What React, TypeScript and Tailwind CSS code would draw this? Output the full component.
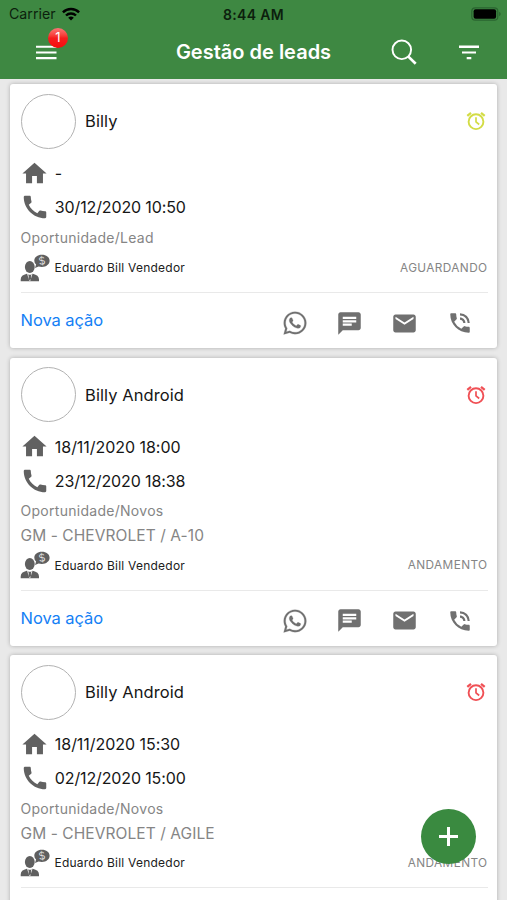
import React from "react";
import { MdHome, MdCall, MdChat, MdEmail, MdPhoneInTalk } from "react-icons/md";
import { FaWhatsapp } from "react-icons/fa";

type Lead = {
  name: string;
  visit: string;
  call: string;
  kind: string;
  car?: string;
  status: string;
  alarm: string;
};

const leads: Lead[] = [
  { name: "Billy", visit: "-", call: "30/12/2020 10:50", kind: "Oportunidade/Lead", status: "AGUARDANDO", alarm: "text-[#d3dc45]" },
  { name: "Billy Android", visit: "18/11/2020 18:00", call: "23/12/2020 18:38", kind: "Oportunidade/Novos", car: "GM - CHEVROLET / A-10", status: "ANDAMENTO", alarm: "text-[#f05055]" },
  { name: "Billy Android", visit: "18/11/2020 15:30", call: "02/12/2020 15:00", kind: "Oportunidade/Novos", car: "GM - CHEVROLET / AGILE", status: "ANDAMENTO", alarm: "text-[#f05055]" },
];

function AlarmIcon({ className }: { className: string }) {
  return (
    <svg width="20" height="20" viewBox="0 0 20 20" fill="none" stroke="currentColor" className={className}>
      <circle cx="10" cy="10.7" r="7.4" strokeWidth="1.9" />
      <path d="M10 6.2v4.600l3.200 2.700" strokeWidth="1.700" />
      <path d="M1.300 4.800L5 1.800M18.700 4.800L15 1.800" strokeWidth="2.300" />
    </svg>
  );
}

function SellerIcon() {
  return (
    <svg width="30" height="28" viewBox="0 0 30 28" fill="#5f5f5f" className="-ml-[0.5px]">
      <ellipse cx="9.800" cy="13" rx="4.900" ry="6" />
      <path d="M.7 27.200v-1.700c0-3 2-4.700 6.200-5.700l2.900 1.500 2.900-1.500c4.200 1 6.300 2.700 6.300 5.700v1.700z" />
      <path d="M7.600 20l2.200 6.800L12 20" fill="none" stroke="#fff" strokeWidth=".8" />
      <path d="M9.100 20.700h1.400l.5 4-1.200 1.800-1.200-1.800z" />
      <path d="M21.900.8c4.400 0 7.700 2.500 7.700 5.900s-3.300 6.200-7.700 6.200c-1.200 0-2.300-.2-3.300-.5l-3.600 1.700 1.100-3.500a5.200 5.200 0 0 1-1.800-3.900C14.300 3.300 17.500.8 21.900.8z" />
      <text x="21.900" y="10.500" textAnchor="middle" fontSize="10.500" fill="#ddd" fontFamily="Inter, sans-serif" transform="rotate(-10 21.900 7)">$</text>
    </svg>
  );
}

function LeadCard({ lead }: { lead: Lead }) {
  return (
    <article className="flex shrink-0 flex-col rounded-[3px] bg-white pt-[9px] pr-[9.5px] pl-[10.5px] shadow-[0_0_4px_rgba(0,0,0,0.26)]">
      <div className="flex h-14 items-center">
        <div className="size-[55px] rounded-full border-[1.5px] border-[#b2b2b2]" />
        <h2 className="ml-[9.5px] flex-1 pt-[1px] text-[16.5px] tracking-[0.08px] text-[#161616]">{lead.name}</h2>
        <AlarmIcon className={`mr-[2px] ${lead.alarm}`} />
      </div>
      <div className="mt-[7px] flex h-[34px] items-center pt-[0.5px] text-[16px] tracking-[-0.04px] text-[#161616]">
        <MdHome size={29} className="mr-[6px] -ml-[0.7px] text-[#616161]" />
        {lead.visit}
      </div>
      <div className="flex h-[34px] items-center pt-[0.5px] text-[16px] tracking-[-0.13px] text-[#161616]">
        <MdCall size={30} className="mr-[5px] -ml-[0.7px] text-[#616161]" />
        {lead.call}
      </div>
      <div className="flex h-[25px] items-center pt-[1px] text-[14px] tracking-[0.28px] text-[#858585]">{lead.kind}</div>
      {lead.car && <div className="flex h-6 items-center pt-[3px] text-[15.5px] tracking-[0.08px] text-[#858585]">{lead.car}</div>}
      <div className="flex h-[37px] items-center">
        <SellerIcon />
        <span className="ml-[4.5px] flex-1 pt-[1px] text-[12px] tracking-[0.23px] text-[#202020]">Eduardo Bill Vendedor</span>
        <span className="pt-[2px] text-[11.8px] tracking-[0.4px] text-[#858585]">{lead.status}</span>
      </div>
      <div className="mt-[6px] flex h-14 items-center border-t border-[#e9e9e9]">
        <a className="flex-1 text-[16.5px] tracking-[-0.05px] text-[#1480f5]">Nova ação</a>
        <div className="flex items-center gap-[29px] pt-[5px] pr-[15px] text-[#707070]">
          <FaWhatsapp size={26} stroke="currentColor" strokeWidth={4} />
          <MdChat size={27} className="-mx-[0.5px]" />
          <MdEmail size={27} className="-mx-[0.5px]" />
          <MdPhoneInTalk size={26} />
        </div>
      </div>
    </article>
  );
}

function StatusBar() {
  return (
    <div className="grid h-7 grid-cols-3 items-center px-[9px] text-[14px] text-[#0c1f0d]">
      <div className="flex items-center gap-[6px]">
        <span className="text-[14.2px]">Carrier</span>
        <svg width="18" height="14" viewBox="0 0 18 14" fill="none" stroke="#000" strokeWidth="2.4">
          <path d="M.9 5.300a11.500 11.500 0 0 1 16.200 0" />
          <path d="M4 8.500a7.100 7.100 0 0 1 10 0" />
          <path d="M9 13.600L6.200 10.800a4 4 0 0 1 5.600 0z" fill="#000" stroke="none" />
        </svg>
      </div>
      <span className="text-center font-semibold tracking-[0.3px] whitespace-nowrap">8:44 AM</span>
      <svg width="31" height="14" viewBox="0 0 31 14" className="-mr-[4px] justify-self-end">
        <rect x=".8" y=".8" width="26" height="12.400" rx="3.500" fill="none" stroke="#2a6430" strokeWidth="1.200" />
        <rect x="2.600" y="2.300" width="22.500" height="9.400" rx="2" fill="#000" />
        <path d="M28.200 4.800c2 .8 2 3.600 0 4.400z" fill="#2a6430" />
      </svg>
    </div>
  );
}

function NavBar() {
  return (
    <div className="flex h-[51px] items-center pr-[28px] pb-[3px] pl-9 text-white">
      <div className="relative w-[20px]">
        <svg width="21" height="15" viewBox="0 0 21 15" fill="currentColor">
          <path d="M0 .7h20.500v2.100H0zM0 6.400h20.500v2.100H0zM0 12.100h20.500v2.100H0z" />
        </svg>
        <span className="absolute -top-[17px] left-[12px] flex size-5 items-center justify-center rounded-full bg-linear-to-b from-[#fa7474] via-[#f51d1d] to-[#f50a0a] text-[13px]">
          1
        </span>
      </div>
      <h1 className="flex-1 pl-[87px] text-center text-[20px] font-semibold whitespace-nowrap">Gestão de leads</h1>
      <svg width="26" height="26" viewBox="0 0 26 26" fill="none" stroke="currentColor" className="mr-[42px] ml-[27px]">
        <circle cx="10.800" cy="10.800" r="9.300" strokeWidth="1.900" />
        <path d="M17.400 17.600l7.300 7.200" strokeWidth="2.700" />
      </svg>
      <svg width="20" height="15" viewBox="0 0 20 15" fill="currentColor">
        <path d="M0 .6h20v2.300H0zM3 6.400h14v2.200H3zM7.700 12.100h4.600v2.200H7.700z" />
      </svg>
    </div>
  );
}

export default function App() {
  return (
    <div className="relative flex h-[900px] flex-col overflow-hidden bg-[#e9e9e9] font-[Inter,'Liberation_Sans',sans-serif]">
      <header className="shrink-0 bg-[#3e8842]">
        <StatusBar />
        <NavBar />
      </header>
      <main className="flex flex-1 flex-col gap-[9.5px] overflow-hidden px-[10px] pt-[5px]">
        {leads.map((lead, i) => (
          <LeadCard key={i} lead={lead} />
        ))}
      </main>
      <button className="absolute right-[31px] bottom-[36px] flex size-[55px] items-center justify-center rounded-full bg-[#3a8a40]">
        <svg width="19" height="19" viewBox="0 0 19 19" stroke="#fff" strokeWidth="3">
          <path d="M9.500 0v19M0 9.500h19" />
        </svg>
      </button>
    </div>
  );
}
